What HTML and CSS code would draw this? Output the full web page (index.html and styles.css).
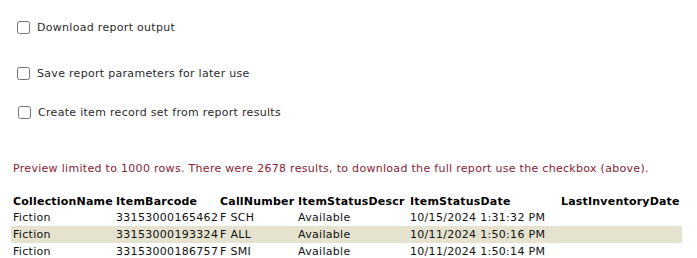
FILE: index.html
```html
<!DOCTYPE html>
<html>
<head>
<meta charset="utf-8">
<link rel="stylesheet" href="styles.css">
</head>
<body>
<div class="page">
  <div class="options">
    <label class="opt opt-first"><input type="checkbox" class="cb"> <span>Download report output</span></label>
    <label class="opt opt-second"><input type="checkbox" class="cb"> <span>Save report parameters for later use</span></label>
    <label class="opt opt-third"><input type="checkbox" class="cb"> <span>Create item record set from report results</span></label>
  </div>
  <p class="notice">Preview limited to 1000 rows. There were 2678 results, to download the full report use the checkbox (above).</p>
  <table class="results">
    <colgroup>
      <col class="c1"><col class="c2"><col class="c3"><col class="c4"><col class="c5"><col class="c6">
    </colgroup>
    <thead>
      <tr><th>CollectionName</th><th>ItemBarcode</th><th>CallNumber</th><th>ItemStatusDescr</th><th>ItemStatusDate</th><th>LastInventoryDate</th></tr>
    </thead>
    <tbody>
      <tr><td>Fiction</td><td>33153000165462</td><td>F SCH</td><td>Available</td><td>10/15/2024 1:31:32 PM</td><td></td></tr>
      <tr class="alt"><td>Fiction</td><td>33153000193324</td><td>F ALL</td><td>Available</td><td>10/11/2024 1:50:16 PM</td><td></td></tr>
      <tr><td>Fiction</td><td>33153000186757</td><td>F SMI</td><td>Available</td><td>10/11/2024 1:50:14 PM</td><td></td></tr>
    </tbody>
  </table>
</div>
</body>
</html>
```
FILE: styles.css
```css
html, body {
  margin: 0;
  padding: 0;
  background: #fff;
}
body {
  font-family: Verdana, "DejaVu Sans", sans-serif;
  font-size: 11px;
  letter-spacing: 0.3px;
  color: #000;
}
.page {
  padding: 0 0 0 11px;
}
.options {
  display: flex;
  flex-direction: column;
}
.opt {
  display: flex;
  align-items: center;
  height: 16px;
  color: #2b2b2b;
}
.opt-first { margin-top: 19px; }
.opt-second { margin-top: 30px; }
.opt-third { margin-top: 23px; padding-left: 1px; }
.cb {
  width: 13px;
  height: 13px;
  margin: 0 7px 0 6px;
}
.notice {
  color: #8b2232;
  margin: 41px 0 0 2px;
  line-height: 16px;
}
.results {
  border-collapse: collapse;
  table-layout: fixed;
  width: 671px;
  margin-top: 17px;
}
.c1 { width: 103px; }
.c2 { width: 104px; }
.c3 { width: 78px; }
.c4 { width: 112px; }
.c5 { width: 151px; }
.c6 { width: 123px; }
.results th, .results td {
  padding: 0 0 0 2px;
  text-align: left;
  white-space: nowrap;
  overflow: hidden;
}
.results th {
  font-weight: bold;
  color: #000;
  height: 16px;
  line-height: 16px;
  letter-spacing: 0.2px;
}
.results td {
  color: #111;
  height: 17px;
  line-height: 17px;
}
.results tbody tr:first-child td {
  height: 16px;
  line-height: 16px;
}
.results tr.alt td {
  background: #e5e3cf;
}
```
